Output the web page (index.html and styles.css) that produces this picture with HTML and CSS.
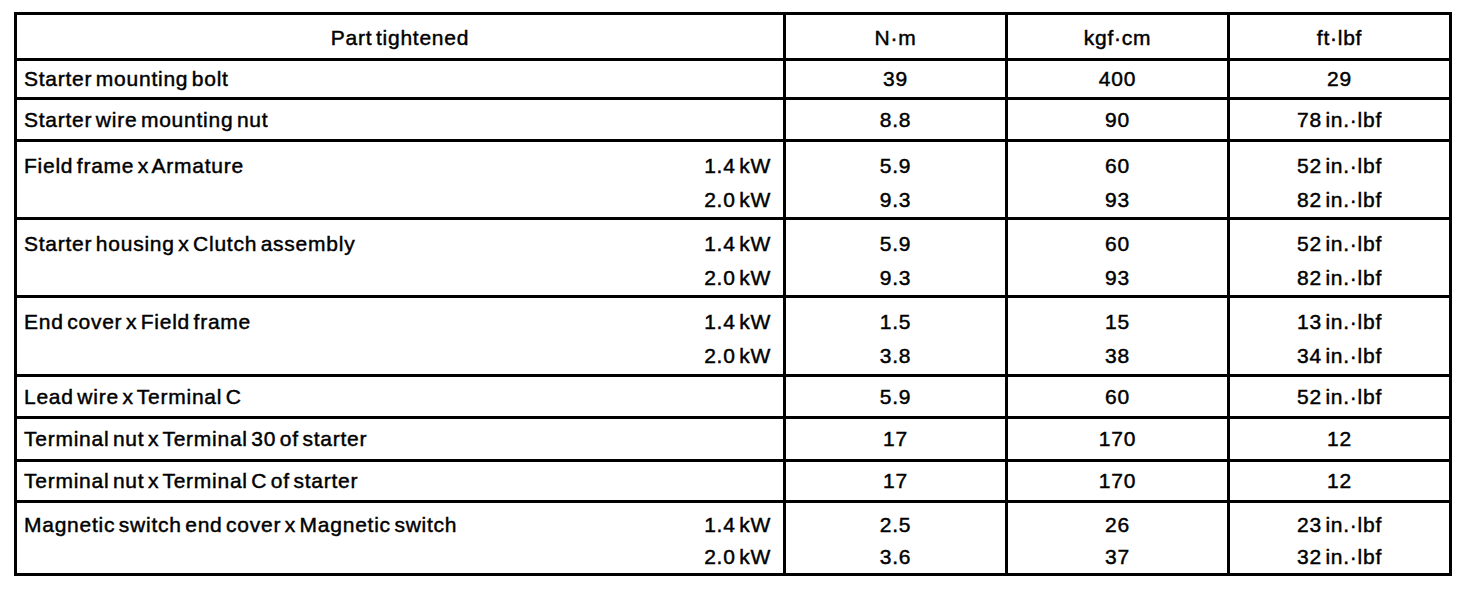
FILE: index.html
```html
<!DOCTYPE html>
<html>
<head>
<meta charset="utf-8">
<link rel="stylesheet" href="styles.css">
</head>
<body>
<table class="torque">
  <colgroup>
    <col class="c-part">
    <col class="c-val">
    <col class="c-val">
    <col class="c-val">
  </colgroup>
  <thead>
    <tr class="r-head">
      <th>Part tightened</th>
      <th>N·m</th>
      <th>kgf·cm</th>
      <th>ft·lbf</th>
    </tr>
  </thead>
  <tbody>
    <tr class="r-one r-a">
      <td class="part">Starter mounting bolt</td>
      <td>39</td><td>400</td><td>29</td>
    </tr>
    <tr class="r-one r-b">
      <td class="part">Starter wire mounting nut</td>
      <td>8.8</td><td>90</td><td>78 in.·lbf</td>
    </tr>
    <tr class="r-two">
      <td class="part"><div class="split"><span>Field frame x Armature</span><span class="kw">1.4 kW<br>2.0 kW</span></div></td>
      <td>5.9<br>9.3</td><td>60<br>93</td><td>52 in.·lbf<br>82 in.·lbf</td>
    </tr>
    <tr class="r-two">
      <td class="part"><div class="split"><span>Starter housing x Clutch assembly</span><span class="kw">1.4 kW<br>2.0 kW</span></div></td>
      <td>5.9<br>9.3</td><td>60<br>93</td><td>52 in.·lbf<br>82 in.·lbf</td>
    </tr>
    <tr class="r-two r-wide">
      <td class="part"><div class="split"><span>End cover x Field frame</span><span class="kw">1.4 kW<br>2.0 kW</span></div></td>
      <td>1.5<br>3.8</td><td>15<br>38</td><td>13 in.·lbf<br>34 in.·lbf</td>
    </tr>
    <tr class="r-one r-b">
      <td class="part">Lead wire x Terminal C</td>
      <td>5.9</td><td>60</td><td>52 in.·lbf</td>
    </tr>
    <tr class="r-one r-d">
      <td class="part">Terminal nut x Terminal 30 of starter</td>
      <td>17</td><td>170</td><td>12</td>
    </tr>
    <tr class="r-one r-c">
      <td class="part">Terminal nut x Terminal C of starter</td>
      <td>17</td><td>170</td><td>12</td>
    </tr>
    <tr class="r-two r-last">
      <td class="part"><div class="split"><span>Magnetic switch end cover x Magnetic switch</span><span class="kw">1.4 kW<br>2.0 kW</span></div></td>
      <td>2.5<br>3.6</td><td>26<br>37</td><td>23 in.·lbf<br>32 in.·lbf</td>
    </tr>
  </tbody>
</table>
</body>
</html>
```

FILE: styles.css
```css
html, body {
  margin: 0;
  padding: 0;
  background: #ffffff;
}

body {
  padding: 12px 0 0 14px;
  font-family: "Liberation Sans", Arial, Helvetica, sans-serif;
  color: #000;
}

.torque {
  border-collapse: collapse;
  table-layout: fixed;
  width: 1436px;
  font-size: 21px;
  letter-spacing: 0.75px;
  word-spacing: -3px;
  -webkit-text-stroke: 0.45px #000;
}

.c-part { width: 769px; }
.c-val { width: 222px; }

.torque th,
.torque td {
  border: 3px solid #000;
  padding: 0;
  text-align: center;
  font-weight: normal;
  vertical-align: middle;
}

.torque th {
  padding-top: 3px;
}

.torque td.part {
  text-align: left;
  padding-left: 7px;
  padding-right: 12px;
}

.r-head { height: 46px; }
.r-a { height: 39px; }
.r-b { height: 42px; }
.r-c { height: 41px; }
.r-d { height: 43px; }

.r-two td {
  vertical-align: top;
  line-height: 34px;
  padding-top: 7px;
  padding-bottom: 0;
  height: 67px;
}

.r-wide td {
  height: 69px;
}

.r-last td {
  line-height: 32px;
  padding-top: 6px;
  height: 64px;
}

.split {
  display: flex;
  justify-content: space-between;
}

.kw {
  text-align: right;
}
```
